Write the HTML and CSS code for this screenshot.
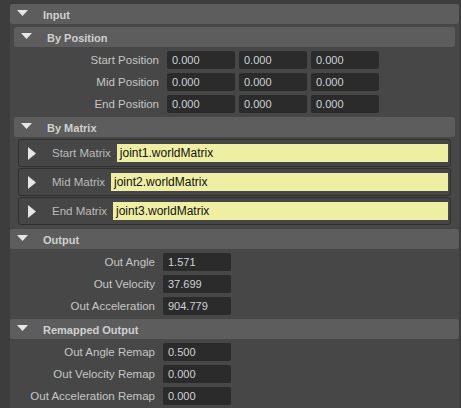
FILE: index.html
```html
<!DOCTYPE html>
<html>
<head>
<meta charset="utf-8">
<link rel="stylesheet" href="styles.css">
</head>
<body>
<div class="editor">
  <section class="sec">
    <div class="hdr"><svg class="tri-down" width="11" height="6" viewBox="0 0 11 6"><polygon points="0,0 11,0 5.5,6" /></svg><span>Input</span></div>
    <div class="body body-input">
      <section class="sec">
        <div class="hdr"><svg class="tri-down" width="11" height="6" viewBox="0 0 11 6"><polygon points="0,0 11,0 5.5,6" /></svg><span>By Position</span></div>
        <div class="body body-rows">
          <div class="row"><label>Start Position</label><span class="fld">0.000</span><span class="fld">0.000</span><span class="fld">0.000</span></div>
          <div class="row"><label>Mid Position</label><span class="fld">0.000</span><span class="fld">0.000</span><span class="fld">0.000</span></div>
          <div class="row"><label>End Position</label><span class="fld">0.000</span><span class="fld">0.000</span><span class="fld">0.000</span></div>
        </div>
      </section>
      <section class="sec">
        <div class="hdr"><svg class="tri-down" width="11" height="6" viewBox="0 0 11 6"><polygon points="0,0 11,0 5.5,6" /></svg><span>By Matrix</span></div>
        <div class="body body-frames">
          <div class="frame"><svg class="tri-right" width="8" height="13" viewBox="0 0 8 13"><polygon points="0,0 8,6.5 0,13" /></svg><span class="mlabel">Start Matrix</span><span class="yfld">joint1.worldMatrix</span></div>
          <div class="frame"><svg class="tri-right" width="8" height="13" viewBox="0 0 8 13"><polygon points="0,0 8,6.5 0,13" /></svg><span class="mlabel">Mid Matrix</span><span class="yfld">joint2.worldMatrix</span></div>
          <div class="frame"><svg class="tri-right" width="8" height="13" viewBox="0 0 8 13"><polygon points="0,0 8,6.5 0,13" /></svg><span class="mlabel">End Matrix</span><span class="yfld">joint3.worldMatrix</span></div>
        </div>
      </section>
    </div>
  </section>
  <section class="sec">
    <div class="hdr"><svg class="tri-down" width="11" height="6" viewBox="0 0 11 6"><polygon points="0,0 11,0 5.5,6" /></svg><span>Output</span></div>
    <div class="body body-rows">
      <div class="row"><label>Out Angle</label><span class="fld">1.571</span></div>
      <div class="row"><label>Out Velocity</label><span class="fld">37.699</span></div>
      <div class="row"><label>Out Acceleration</label><span class="fld">904.779</span></div>
    </div>
  </section>
  <section class="sec">
    <div class="hdr"><svg class="tri-down" width="11" height="6" viewBox="0 0 11 6"><polygon points="0,0 11,0 5.5,6" /></svg><span>Remapped Output</span></div>
    <div class="body body-rows">
      <div class="row"><label>Out Angle Remap</label><span class="fld">0.500</span></div>
      <div class="row"><label>Out Velocity Remap</label><span class="fld">0.000</span></div>
      <div class="row"><label>Out Acceleration Remap</label><span class="fld">0.000</span></div>
    </div>
  </section>
</div>
</body>
</html>
```

FILE: styles.css
```css
html, body {
  margin: 0;
  padding: 0;
  background: #3d3d3d;
  height: 100%;
  overflow: hidden;
}
body {
  font-family: "Liberation Sans", Arial, sans-serif;
  color: #c8c8c8;
}
.editor {
  padding-top: 4px;
  margin-left: 10px;
  width: 449px;
  background: linear-gradient(#3d3d3d 0, #3d3d3d 4px, #474747 4px);
  min-height: 404px;
}
.sec {
  display: flex;
  flex-direction: column;
}
.hdr {
  height: 20px;
  background: #5d5d5d;
  border-radius: 3px;
  display: flex;
  align-items: center;
  font-size: 11px;
  font-weight: bold;
  color: #d0d0d0;
}
.tri-down {
  margin-left: 7px;
  margin-top: -2px;
  fill: #e6e6e6;
}
.hdr span {
  margin-left: 15px;
  padding-top: 1px;
}
.body-input {
  padding: 3px 4px 0 4px;
}
.body-rows {
  padding: 4px 0;
  display: flex;
  flex-direction: column;
  gap: 4px;
}
.row {
  display: flex;
  align-items: center;
  height: 18px;
}
.row label {
  width: 145px;
  text-align: right;
  font-size: 11.5px;
  color: #c6c6c6;
  margin-right: 8px;
}
.fld {
  width: 63px;
  height: 18px;
  line-height: 19px;
  padding-left: 5px;
  background: #2b2b2b;
  border-radius: 2px;
  font-size: 11px;
  color: #cfd3d6;
  margin-right: 4px;
}
.body-frames {
  padding: 2px 4px 4px 4px;
  display: flex;
  flex-direction: column;
  gap: 1px;
}
.frame {
  height: 26px;
  border: 1px solid #2f2f2f;
  border-radius: 3px;
  background: #464646;
  display: flex;
  align-items: center;
}
.tri-right {
  margin-left: 9px;
  fill: #e6e6e6;
}
.mlabel {
  margin-left: 16px;
  margin-right: 6px;
  font-size: 11.5px;
  color: #bcbcbc;
}
.yfld {
  flex: 1;
  height: 18px;
  line-height: 19px;
  margin-right: 2px;
  padding-left: 3px;
  background: #efefa3;
  font-size: 12px;
  color: #111111;
}
```
